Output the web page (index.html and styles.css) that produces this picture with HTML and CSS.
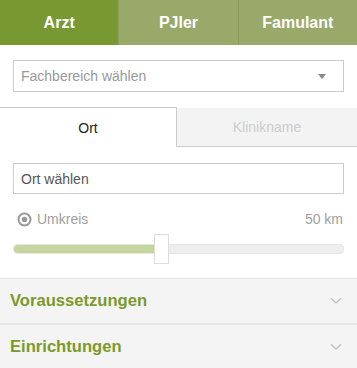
FILE: index.html
```html
<!DOCTYPE html>
<html lang="de">
<head>
  <meta charset="UTF-8" />
  <meta name="viewport" content="width=device-width, initial-scale=1.0" />
  <title>Suche</title>
  <link rel="stylesheet" href="styles.css">
</head>
<body>

  <div class="role-tabs">
    <div class="role-tab active">Arzt</div>
    <div class="role-tab">PJler</div>
    <div class="role-tab">Famulant</div>
  </div>

  <div class="section">
    <div class="select-box">
      <span>Fachbereich wählen</span>
      <span class="caret"></span>
    </div>
  </div>

  <div class="place-tabs">
    <div class="place-tab active">Ort</div>
    <div class="place-tab">Klinikname</div>
  </div>

  <div class="section radius-panel">
    <div class="text-box">Ort wählen</div>

    <div class="radius-row">
      <span class="radius-label">
        <svg width="15" height="15" viewBox="0 0 15 15">
          <circle cx="7.5" cy="7.5" r="6" fill="none" stroke="#999" stroke-width="2"/>
          <circle cx="7.5" cy="7.5" r="2.8" fill="#999"/>
        </svg>
        Umkreis
      </span>
      <span>50 km</span>
    </div>

    <div class="slider">
      <div class="slider-fill" style="width: 141px"></div>
      <div class="slider-handle" style="left: 140px"></div>
    </div>
  </div>

  <div class="accordion">
    <div class="acc-item">
      <span>Voraussetzungen</span>
      <svg width="12" height="8" viewBox="0 0 12 8"><path d="M1 1.5 6 6 11 1.5" fill="none" stroke="#bbb" stroke-width="1.2"/></svg>
    </div>
    <div class="acc-item">
      <span>Einrichtungen</span>
      <svg width="12" height="8" viewBox="0 0 12 8"><path d="M1 1.5 6 6 11 1.5" fill="none" stroke="#bbb" stroke-width="1.2"/></svg>
    </div>
  </div>

</body>
</html>
```

FILE: styles.css
```css
body {
  margin: 0;
  font-family: "Liberation Sans", Arial, sans-serif;
  background: #fff;
  width: 357px;
  overflow: hidden;
}

.role-tabs {
  display: flex;
  height: 45px;
}

.role-tab {
  flex: 1;
  display: flex;
  align-items: center;
  justify-content: center;
  background: #98a96a;
  color: #fff;
  font-weight: bold;
  font-size: 16px;
  border-left: 1px solid #8c9e5c;
}

.role-tab:first-child {
  border-left: none;
}

.role-tab.active {
  background: #789932;
}

.section {
  padding: 15px 13px 15px 13px;
}

.select-box {
  height: 30px;
  border: 1px solid #ccc;
  display: flex;
  align-items: center;
  justify-content: space-between;
  padding: 0 17px 0 7px;
  font-size: 14px;
  color: #999;
}

.caret {
  width: 0;
  height: 0;
  border-left: 4px solid transparent;
  border-right: 4px solid transparent;
  border-top: 5px solid #888;
}

.place-tabs {
  display: flex;
  height: 40px;
}

.place-tab {
  flex: 1;
  display: flex;
  align-items: center;
  justify-content: center;
  font-size: 14px;
  color: #ccc;
  background: #f3f3f3;
  border-bottom: 1px solid #ccc;
  margin-top: 1px;
}

.place-tab.active {
  flex: 0 0 176px;
  color: #222;
  background: #fff;
  border-top: 1px solid #ccc;
  border-right: 1px solid #ccc;
  border-bottom: none;
  margin-top: 0;
}

.radius-panel {
  padding-top: 16px;
  padding-bottom: 16px;
  border-bottom: 1px solid #e4e4e4;
}

.text-box {
  height: 29px;
  border: 1px solid #ccc;
  display: flex;
  align-items: center;
  padding: 0 7px;
  font-size: 14px;
  color: #555;
}

.radius-row {
  display: flex;
  justify-content: space-between;
  align-items: center;
  margin-top: 16px;
  padding: 0 1px 0 4px;
  font-size: 14px;
  color: #a0a0a0;
  height: 18px;
}

.radius-label {
  display: flex;
  align-items: center;
  gap: 5px;
}

.slider {
  position: relative;
  margin-top: 16px;
  height: 10px;
  background: #eee;
  border: 1px solid #e6e6e6;
  box-sizing: border-box;
  border-radius: 4px;
  margin-bottom: 8px;
}

.slider-fill {
  height: 100%;
  background: #c6d59c;
  border-radius: 4px 0 0 4px;
}

.slider-handle {
  position: absolute;
  top: -11px;
  width: 13px;
  height: 28px;
  background: #fff;
  border: 1px solid #ddd;
}

.accordion {
  background: #f4f4f4;
}

.acc-item {
  height: 44px;
  display: flex;
  align-items: center;
  justify-content: space-between;
  padding: 0 15px 0 10px;
  font-size: 16.6px;
  font-weight: bold;
  color: #7b9a2b;
  border-bottom: 2px solid #e6e6e6;
}
```
